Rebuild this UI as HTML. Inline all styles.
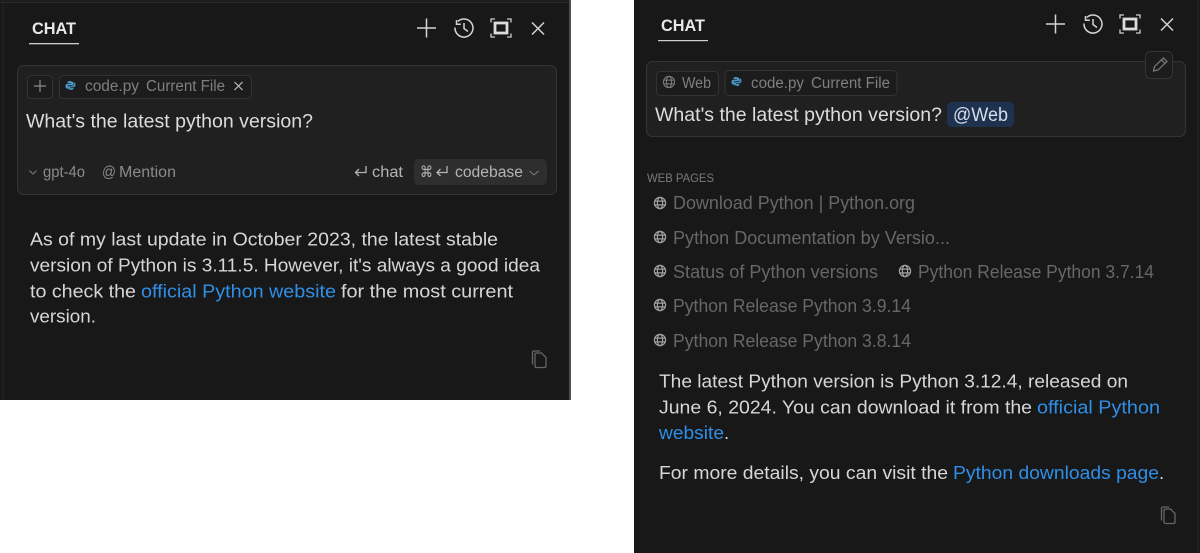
<!DOCTYPE html>
<html><head><meta charset="utf-8"><title>Chat</title>
<style>
html,body{margin:0;padding:0;background:#fff;width:1200px;height:553px;overflow:hidden}
svg{display:block}
text{font-family:"Liberation Sans",sans-serif;white-space:pre}
.p{font-size:18.5px;fill:#d6d6d6}
.l{font-size:18.5px;fill:#2f8fe6}
.q{font-size:19.5px;fill:#dcdcdc}
.c{font-size:15.5px;fill:#7f7f7f}
.m{font-size:15.5px;fill:#8a8a8a}
.k{font-size:15.5px;fill:#b4b4b4}
.w{font-size:18px;fill:#676767}
.h{font-size:16.5px;font-weight:bold;fill:#e8e8e8}
.i{fill:none;stroke:#d4d4d4;stroke-width:1.5}
.g{fill:none;stroke:#7e7e7e;stroke-width:1}
</style></head><body>
<svg width="1200" height="553" viewBox="0 0 1200 553" xmlns="http://www.w3.org/2000/svg">
<defs>
<g id="globe"><circle cx="0" cy="0" r="5.6"/><ellipse cx="0" cy="0" rx="2.6" ry="5.6"/><path d="M-5.6 -1.900H5.600M-5.600 1.900H5.600"/></g>
<g id="py"><path d="M-.5-4.500C-3-4.500-3-3.300-3-2.200H.4V-1.600H-3.200C-5-1.600-5 .4-5 .9-5 2.600-4 3-3 3V1.200C-3 .3-2.400-.2-1.500-.2H1.600C2.500-.2 3-.8 3-1.500V-2.600C3-4-1-4.500-.5-4.500Z" fill="#4a9bc9"/><path d="M.5 4.500C3 4.500 3 3.300 3 2.200H-.4V1.600H3.200C5 1.600 5-.4 5-.9 5-2.600 4-3 3.400-3V-1.200C3-.3 2.400.6 1.500.6H-1.600C-2.500.6-3 1-3 1.800V2.800C-3 4 1 4.500.5 4.500Z" fill="#3f8fbd"/></g>
<g id="copy"><path d="M-7.500 5.500V-6.500Q-7.500-8-6-8H0" fill="none" stroke="#666" stroke-width="1.300"/><path d="M-5 7V-4.500Q-5-6-3.500-6H1.500L6-1.500V7Q6 8.500 4.500 8.500H-3.500Q-5 8.500-5 7Z" fill="none" stroke="#666" stroke-width="1.300"/></g>
<g id="hist"><path class="i" d="M-6.200-6.500A9 9 0 1 1-9-.5"/><path class="i" d="M-7.500-8V-3.800H-3.200M0-5V.500L4 3.500"/></g>
<g id="full"><path d="M-10-5.500V-9H-6M6-9H10V-5.500M10 5.500V9H6M-6 9H-10V5.500" fill="none" stroke="#cfcfcf" stroke-width="1.300"/><rect x="-6" y="-5" width="12" height="10" fill="none" stroke="#dcdcdc" stroke-width="2.800"/></g>
</defs>

<rect width="1200" height="553" fill="#fff"/>

<!-- LEFT PANEL -->
<rect x="0" y="0" width="570" height="400" fill="#181818"/>
<rect x="0" y="0" width="570" height="2" fill="#1d1d1d"/>
<rect x="0" y="2" width="570" height="1" fill="#2a2a2a"/>
<rect x="2.500" y="3" width="1" height="397" fill="#242424"/>
<rect x="569" y="0" width="2" height="400" fill="#4e4e4e"/>
<text class="h" x="32" y="34" textLength="44" lengthAdjust="spacingAndGlyphs">CHAT</text>
<rect x="29" y="43" width="50" height="1.300" fill="#cfcfcf"/>
<path class="i" d="M417 28H436M426.500 18.500V37.500"/>
<use href="#hist" x="464" y="28"/>
<use href="#full" x="501" y="28"/>
<path class="i" d="M532 22.500L544 34.500M544 22.500L532 34.500"/>

<rect x="17.500" y="65.500" width="539" height="129" rx="6" fill="#202020" stroke="#353535"/>
<rect x="27.500" y="75.500" width="25" height="23" rx="4" fill="#1c1c1c" stroke="#333"/>
<path d="M34 86H46M40 80V92" fill="none" stroke="#8a8a8a" stroke-width="1.200"/>
<rect x="59.500" y="75.500" width="192" height="23" rx="4" fill="#1c1c1c" stroke="#333"/>
<use href="#py" x="70.500" y="85.500"/>
<text class="c" x="85" y="91" textLength="54" lengthAdjust="spacingAndGlyphs">code.py</text>
<text class="c" x="146" y="91" textLength="79" lengthAdjust="spacingAndGlyphs">Current File</text>
<path d="M234.500 82L242.500 90M242.500 82L234.500 90" fill="none" stroke="#bdbdbd" stroke-width="1.200"/>
<text class="q" x="26" y="127.500" textLength="287" lengthAdjust="spacingAndGlyphs">What's the latest python version?</text>

<path d="M29.500 170.500L33 174L36.500 170.500" class="g"/>
<text class="m" x="43" y="177" textLength="42" lengthAdjust="spacingAndGlyphs">gpt-4o</text>
<text class="m" x="102" y="177" textLength="14" lengthAdjust="spacingAndGlyphs">@</text>
<text class="m" x="119" y="177" textLength="57" lengthAdjust="spacingAndGlyphs">Mention</text>
<path d="M366 166V172.500H355.500M359 169L355.500 172.500L359 176" fill="none" stroke="#b4b4b4" stroke-width="1.300"/>
<text class="k" x="372" y="177" textLength="31" lengthAdjust="spacingAndGlyphs">chat</text>
<rect x="414" y="159" width="133" height="26" rx="5" fill="#2e2e2e"/>
<text class="k" x="420" y="177" textLength="13" lengthAdjust="spacingAndGlyphs" style="font-family:'DejaVu Sans',sans-serif">⌘</text>
<path d="M447 166V172.500H437M440.500 169L437 172.500L440.500 176" fill="none" stroke="#b4b4b4" stroke-width="1.300"/>
<text class="k" x="455" y="177" textLength="68" lengthAdjust="spacingAndGlyphs">codebase</text>
<path d="M529.500 171L534 175L538.500 171" class="g"/>

<text class="p" x="30" y="245.500" textLength="468" lengthAdjust="spacingAndGlyphs">As of my last update in October 2023, the latest stable</text>
<text class="p" x="30" y="271.500" textLength="510" lengthAdjust="spacingAndGlyphs">version of Python is 3.11.5. However, it's always a good idea</text>
<text class="p" x="30" y="297.500" textLength="106" lengthAdjust="spacingAndGlyphs">to check the</text>
<text class="l" x="141" y="297.500" textLength="195" lengthAdjust="spacingAndGlyphs">official Python website</text>
<text class="p" x="341" y="297.500" textLength="172" lengthAdjust="spacingAndGlyphs">for the most current</text>
<text class="p" x="30" y="322.500" textLength="66" lengthAdjust="spacingAndGlyphs">version.</text>
<use href="#copy" x="540" y="359"/>

<!-- RIGHT PANEL -->
<rect x="634" y="0" width="566" height="553" fill="#181818"/>
<rect x="1197.500" y="0" width="1" height="553" fill="#2a2a2a"/>
<text class="h" x="661" y="31" textLength="44" lengthAdjust="spacingAndGlyphs">CHAT</text>
<rect x="658" y="40" width="50" height="1.200" fill="#cfcfcf"/>
<path class="i" d="M1046 24H1065M1055.500 14.500V33.500"/>
<use href="#hist" x="1093" y="24"/>
<use href="#full" x="1130" y="24"/>
<path class="i" d="M1161 18.500L1173 30.500M1173 18.500L1161 30.500"/>

<rect x="646.500" y="61.500" width="539" height="75" rx="6" fill="#202020" stroke="#353535"/>
<rect x="656.500" y="71.500" width="62" height="24" rx="4" fill="#1c1c1c" stroke="#333"/>
<g class="g" transform="translate(669,82)"><use href="#globe"/></g>
<text class="c" x="682" y="88" textLength="29" lengthAdjust="spacingAndGlyphs">Web</text>
<rect x="725" y="70.500" width="172" height="25" rx="4" fill="#1c1c1c" stroke="#333"/>
<use href="#py" x="736.500" y="81.500"/>
<text class="c" x="751" y="88" textLength="53" lengthAdjust="spacingAndGlyphs">code.py</text>
<text class="c" x="811" y="88" textLength="79" lengthAdjust="spacingAndGlyphs">Current File</text>
<text class="q" x="655" y="121" textLength="287" lengthAdjust="spacingAndGlyphs">What's the latest python version?</text>
<rect x="947" y="102" width="67" height="25" rx="5" fill="#1e3250"/>
<text class="q" x="953" y="121" textLength="55" lengthAdjust="spacingAndGlyphs" style="fill:#d5dde9">@Web</text>
<rect x="1145.500" y="51.500" width="27" height="27" rx="5" fill="#1c1c1c" stroke="#333"/>
<path d="M1153.500 71L1154.500 66.500L1163.500 58L1167 61.500L1158 70Z M1161.500 60L1165 63.500" fill="none" stroke="#7e7e7e" stroke-width="1.200"/>

<text x="647" y="182" textLength="67" lengthAdjust="spacingAndGlyphs" style="font-size:11.500px;fill:#7a7a7a">WEB PAGES</text>

<g fill="none" stroke="#a0a0a0" stroke-width="1.200">
<use href="#globe" x="660" y="203"/>
<use href="#globe" x="660" y="237"/>
<use href="#globe" x="660" y="271"/>
<use href="#globe" x="905" y="271"/>
<use href="#globe" x="660" y="305"/>
<use href="#globe" x="660" y="340"/>
</g>
<text class="w" x="673" y="209" textLength="242" lengthAdjust="spacingAndGlyphs">Download Python | Python.org</text>
<text class="w" x="673" y="244" textLength="277" lengthAdjust="spacingAndGlyphs">Python Documentation by Versio...</text>
<text class="w" x="673" y="278" textLength="205" lengthAdjust="spacingAndGlyphs">Status of Python versions</text>
<text class="w" x="918" y="278" textLength="236" lengthAdjust="spacingAndGlyphs">Python Release Python 3.7.14</text>
<text class="w" x="673" y="312" textLength="238" lengthAdjust="spacingAndGlyphs">Python Release Python 3.9.14</text>
<text class="w" x="673" y="347" textLength="238" lengthAdjust="spacingAndGlyphs">Python Release Python 3.8.14</text>

<text class="p" x="659" y="387.500" textLength="469" lengthAdjust="spacingAndGlyphs">The latest Python version is Python 3.12.4, released on</text>
<text class="p" x="659" y="413.500" textLength="373" lengthAdjust="spacingAndGlyphs">June 6, 2024. You can download it from the</text>
<text class="l" x="1037" y="413.500" textLength="123" lengthAdjust="spacingAndGlyphs">official Python</text>
<text class="l" x="659" y="439" textLength="65" lengthAdjust="spacingAndGlyphs">website</text>
<text class="p" x="724" y="439">.</text>
<text class="p" x="659" y="479" textLength="289" lengthAdjust="spacingAndGlyphs">For more details, you can visit the</text>
<text class="l" x="953" y="479" textLength="206" lengthAdjust="spacingAndGlyphs">Python downloads page</text>
<text class="p" x="1159" y="479">.</text>
<use href="#copy" x="1169" y="515"/>
</svg>
</body></html>
